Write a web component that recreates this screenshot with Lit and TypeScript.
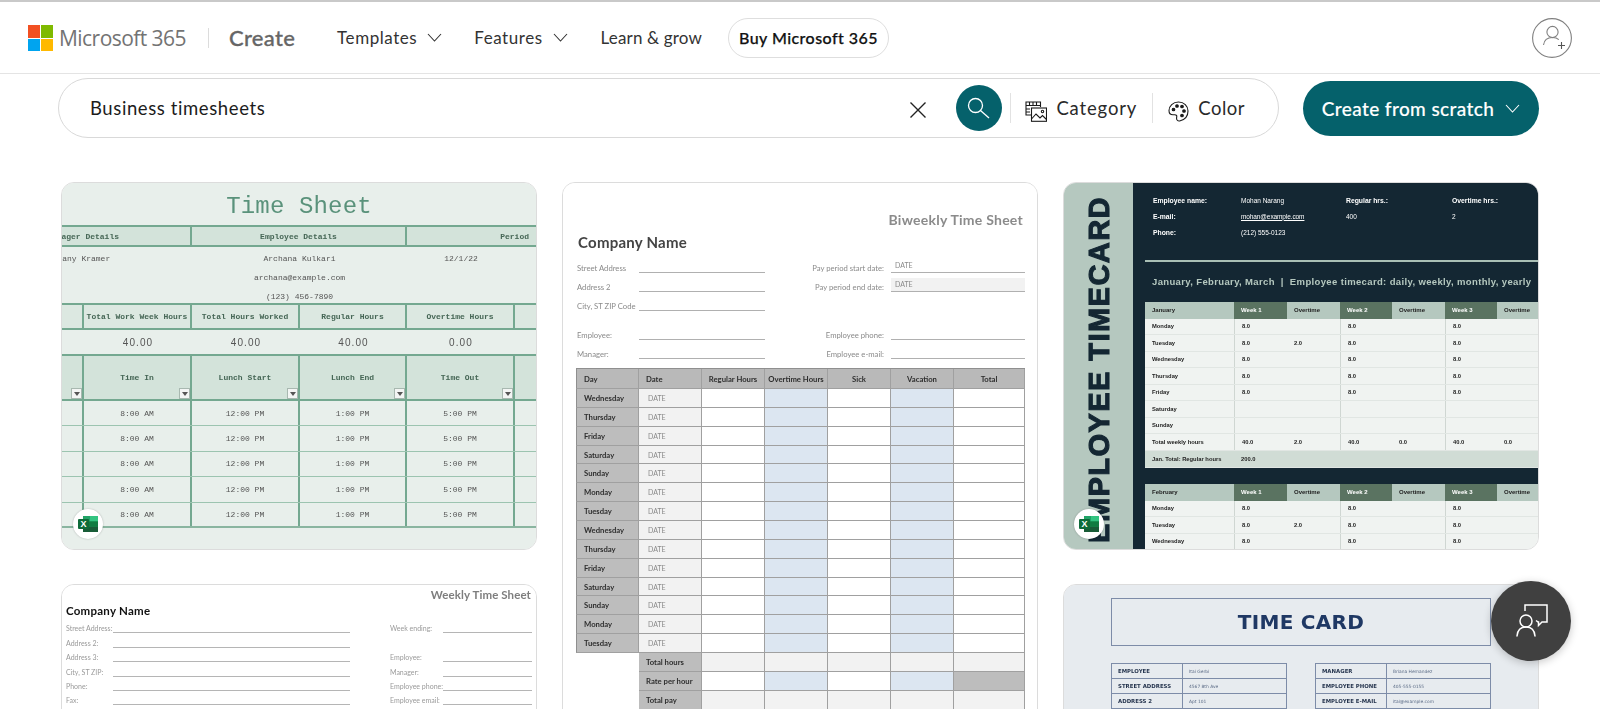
import { LitElement, html, css } from "lit";
import { customElement } from "lit/decorators.js";

const chevron = (size: number, color: string) => html`<svg class="chev" width=${size} height=${Math.round(size * 0.6)} viewBox="0 0 15 9" fill="none" stroke=${color} stroke-width="1.1"><path d="M1 1l6.5 7L14 1"/></svg>`;

const excel = html`<div class="xl">
  <svg width="20" height="16" viewBox="0 0 20 16">
    <rect x="5" y="0" width="15" height="16" rx="1" fill="#21a366"/>
    <rect x="12" y="0" width="8" height="5.4" fill="#33c481"/>
    <rect x="5" y="0" width="7" height="5.4" fill="#21a366"/>
    <rect x="5" y="5.4" width="7" height="5.3" fill="#107c41"/>
    <rect x="12" y="5.4" width="8" height="5.3" fill="#107c41"/>
    <rect x="5" y="10.7" width="15" height="5.3" fill="#185c37"/>
    <rect x="0" y="3" width="11" height="10" rx="1" fill="#0f6b3a"/>
    <text x="5.5" y="11.2" font-family="Liberation Sans" font-weight="700" font-size="9" fill="#fff" text-anchor="middle">X</text>
  </svg>
</div>`;

const tsTimes = ["8:00 AM", "12:00 PM", "1:00 PM", "5:00 PM"];
const tsCols = ["Time In", "Lunch Start", "Lunch End", "Time Out"];
const tsTotals = [
  ["Total Work Week Hours", "40.00"],
  ["Total Hours Worked", "40.00"],
  ["Regular Hours", "40.00"],
  ["Overtime Hours", "0.00"],
];

const bwDays = ["Wednesday", "Thursday", "Friday", "Saturday", "Sunday", "Monday", "Tuesday", "Wednesday", "Thursday", "Friday", "Saturday", "Sunday", "Monday", "Tuesday"];
const bwHead = ["Day", "Date", "Regular Hours", "Overtime Hours", "Sick", "Vacation", "Total"];

const tcRows = [
  ["Monday", "8.0", "", "8.0", "", "8.0", ""],
  ["Tuesday", "8.0", "2.0", "8.0", "", "8.0", ""],
  ["Wednesday", "8.0", "", "8.0", "", "8.0", ""],
  ["Thursday", "8.0", "", "8.0", "", "8.0", ""],
  ["Friday", "8.0", "", "8.0", "", "8.0", ""],
  ["Saturday", "", "", "", "", "", ""],
  ["Sunday", "", "", "", "", "", ""],
];
const tcFeb = tcRows.slice(0, 3);

@customElement("app-root")
export class AppRoot extends LitElement {
  static styles = css`
    :host { display: block; width: 1600px; height: 709px; overflow: hidden; background: #fff; font-family: "Lato", "Liberation Sans", sans-serif; color: #242424; position: relative; }
    * { box-sizing: border-box; }
    .strip { height: 2px; background: #c9c9c9; }
    header { height: 72px; border-bottom: 1px solid #e4e4e4; display: flex; align-items: center; padding: 0 28px 0 28px; }
    .logo { display: grid; grid-template-columns: 12px 12px; grid-auto-rows: 12.5px; gap: 1px; width: 25px; margin-top: 1px; }
    .logo i { display: block; }
    .brand { font-family: "Open Sans", sans-serif; font-size: 21px; letter-spacing: -0.55px; color: #737373; margin-left: 6px; }
    .vsep { width: 1px; height: 20px; background: #dcdcdc; margin: 0 20px 0 22px; }
    .create { font-size: 22px; font-weight: 500; color: #666; letter-spacing: 0.3px; -webkit-text-stroke: 0.3px #666; }
    nav { display: flex; align-items: center; margin-left: 42px; font-size: 17px; letter-spacing: 0.55px; color: #333; }
    .nav-item { display: flex; align-items: center; gap: 10px; margin-right: 32px; }
    .nav-item.feat { margin-right: 33px; }
    .nav-item.plain { margin-right: 26px; letter-spacing: 0.15px; }
    .buy { height: 40px; width: 161px; border: 1px solid #dedede; border-radius: 20px; display: flex; align-items: center; justify-content: center; color: #111; font-weight: 500; font-size: 16px; letter-spacing: 0.45px; -webkit-text-stroke: 0.25px #111; }
    .avatar { margin-left: auto; width: 40px; height: 40px; display: block; }

    .search-row { display: flex; align-items: center; padding: 0 61px 0 58px; gap: 24px; height: 60px; margin-top: 4px; }
    .search { width: 1221px; height: 60px; border: 1px solid #d9d9d9; border-radius: 30px; display: flex; align-items: center; padding-left: 31px; }
    .query { font-size: 18.5px; letter-spacing: 0.6px; color: #1c1c1c; flex: 1; }
    .x { margin-right: 29px; margin-top: 3px; display: block; }
    .go { width: 46px; height: 46px; border-radius: 50%; background: #05616b; display: block; margin-right: 8px; }
    .sep2 { width: 1px; height: 30px; background: #e2e2e2; }
    .tool { display: flex; align-items: center; font-size: 18.5px; letter-spacing: 0.85px; color: #2a2a2a; }
    .tool svg { display: block; margin-top: 6px; }
    .tool.cat { padding: 0 15px 0 14px; gap: 9px; }
    .tool.pal { padding: 0 33px 0 15px; gap: 9px; letter-spacing: 0.5px; }
    .cfs { width: 236px; height: 55px; border-radius: 28px; background: #05616b; color: #fff; display: flex; align-items: center; justify-content: center; gap: 11px; font-size: 19px; font-weight: 500; letter-spacing: 0.4px; -webkit-text-stroke: 0.15px #fff; }

    .cols { display: flex; gap: 25px; padding: 0 61px; margin-top: 44px; }
    .col-m { width: 476px; display: flex; flex-direction: column; gap: 34px; flex: none; }
    .card { position: relative; width: 476px; height: 368px; border: 1px solid #dcdcdc; border-radius: 13px; overflow: hidden; flex: none; }
    .card.short { height: 300px; }
    .card.tall { height: 560px; }
    .thumb { width: 100%; height: 100%; filter: blur(0.3px); }
    .xl { position: absolute; left: 11px; top: 326px; width: 30px; height: 30px; border-radius: 50%; background: #fff; display: flex; align-items: center; justify-content: center; box-shadow: 0 0 2px rgba(0,0,0,.25); }
    .card.dark .xl { left: 10px; }

    /* Time Sheet */
    .ts { background: #e8efeb; font-family: "Liberation Mono", monospace; color: #555; font-size: 8px; }
    .ts-title { height: 44px; padding-top: 5px; display: flex; align-items: center; justify-content: center; font-size: 24px; letter-spacing: 0.15px; color: #5a927b; border-bottom: 2px solid #74a890; }
    .tr { display: grid; grid-template-columns: 22px 108px 108px 107px 108px 1fr; border-bottom: 2px solid #74a890; }
    .tr > div { display: flex; align-items: center; justify-content: center; border-right: 2px solid #74a890; white-space: nowrap; position: relative; }
    .tr > div:last-child { border-right: 0; }
    .h1 { height: 20px; background: #d3e3da; font-weight: 700; color: #456655; grid-template-columns: 130px 215px 1fr; }
    .h1 .lead { justify-content: flex-start; }
    .h1 .lead span { margin-left: -15px; }
    .h1 .per { justify-content: flex-end; padding-right: 7px; }
    .det { height: 58px; grid-template-columns: 130px 215px 1fr; align-items: start; }
    .det > div { border-right: 0; flex-direction: column; justify-content: flex-start; padding-top: 2px; line-height: 19px; }
    .det .lead { align-items: flex-start; }
    .det .lead span { margin-left: -19px; }
    .det .per { padding-right: 21px; }
    .h2 { height: 25px; font-weight: 700; }
    .h2 > div { background: #dce8e1; color: #456655; }
    .nums { height: 26px; font-size: 10px; font-family: "Liberation Sans", sans-serif; letter-spacing: 1.1px; }
    .nums > div { border-right: 0; }
    .h3 { height: 45px; font-weight: 700; }
    .h3 > div { background: #d3e3da; color: #456655; font-size: 8px; }
    .flt { position: absolute; right: 0; bottom: 0; width: 11px; height: 11px; background: #f3f5f4; border: 1px solid #a8b8b0; display: flex; align-items: center; justify-content: center; }
    .flt::after { content: ""; border-left: 3px solid transparent; border-right: 3px solid transparent; border-top: 4px solid #555; }
    .dr { height: 25.4px; border-bottom: 1px solid #9cc4b0; }
    .dr:last-child { border-bottom: 2px solid #8ab5a0; }

    /* Biweekly */
    .bw { padding: 28px 13px 0; background: #fff; font-family: "Lato", "Liberation Sans", sans-serif; color: #8a8a8a; font-size: 7.7px; }
    .bw-title { text-align: right; padding-right: 1px; font-weight: 700; font-size: 14px; line-height: 18px; color: #8b8b8b; letter-spacing: 0.25px; }
    .bw-co { font-weight: 700; font-size: 15px; line-height: 18px; color: #444; margin: 4px 0 0 2px; letter-spacing: 0.25px; }
    .bw-form { display: grid; grid-template-columns: 63px 126px 126px 134px; grid-template-rows: 14px 14px 14px 5px 14px 14px; row-gap: 5px; margin-top: 8px; }
    .lbl { padding-left: 1px; line-height: 9px; align-self: end; white-space: nowrap; }
    .rl { text-align: right; padding-right: 7px; line-height: 9px; align-self: end; white-space: nowrap; }
    .ln { border-bottom: 1px solid #b0b0b0; padding-left: 4px; font-size: 7px; display: flex; align-items: flex-end; padding-bottom: 2px; line-height: 9px; }
    .ln.shade { background: #f2f2f2; }
    .gapr { grid-column: 1 / -1; }
    .bw-table { margin-top: 9px; width: 449px; border-top: 1px solid #8f8f8f; font-size: 7.7px; }
    .bwr { display: grid; grid-template-columns: 63px 63px 63px 63px 63px 63px 1fr; height: 18.86px; }
    .bwr > div { border-right: 1px solid #a0a0a0; border-bottom: 1px solid #a0a0a0; display: flex; align-items: center; white-space: nowrap; }
    .bwr > div:first-child { border-left: 1px solid #8f8f8f; }
    .bwr.head { height: 20px; }
    .bwr.head > div { background: #b9b9b9; color: #2e2e2e; font-weight: 700; justify-content: center; }
    .bwr.head > div:nth-child(-n+2) { justify-content: flex-start; padding-left: 7px; }
    .day { background: #bdbdbd; color: #2e2e2e; font-weight: 700; padding-left: 7px; }
    .dt { background: #f2f2f2; color: #8a8a8a; padding-left: 9px; font-size: 7px; }
    .blue { background: #dce6f1; }
    .lgt { background: #f2f2f2; }
    .dk { background: #bdbdbd; }
    .bwr > div.none { border: 0; }

    /* Timecard */
    .tc { display: flex; background: #142733; font-family: "Liberation Sans", sans-serif; }
    .side { width: 69px; flex: none; background: #b5c8bf; display: flex; align-items: flex-start; justify-content: center; padding-top: 13px; }
    .side span { writing-mode: vertical-rl; transform: rotate(180deg); font-weight: 700; font-size: 29px; letter-spacing: 1.45px; color: #142733; -webkit-text-stroke: 1.1px #142733; white-space: nowrap; line-height: 30px; }
    .tc-main { flex: 1; padding: 9px 0 0 12px; min-width: 0; }
    .tc-info { display: grid; grid-template-columns: 88px 105px 106px 1fr; grid-auto-rows: 16px; padding-left: 8px; color: #fff; font-size: 6.5px; align-items: center; white-space: nowrap; }
    .tc-info b { font-size: 6.8px; }
    .tc-info u { letter-spacing: -0.1px; }
    .tc-div { height: 1.5px; background: #a9bfb5; margin-top: 20px; }
    .tc-sub { margin: 13px 0 0 7px; height: 14px; line-height: 14px; font-weight: 700; font-size: 9.5px; letter-spacing: 0.36px; color: #b5c8bf; white-space: nowrap; }
    .tcr { display: grid; grid-template-columns: 89px 53px 53px 52px 53px 52px 1fr; height: 16.5px; background: #f0f3f1; border-bottom: 1px solid #e1e6e3; color: #222; font-size: 5.8px; font-weight: 700; }
    .tcr > div { display: flex; align-items: center; padding-left: 7px; white-space: nowrap; }
    .tcr > div:nth-child(2n) { border-left: 1px solid #cfd6d2; }
    .tcr.hd { height: 17px; border: 0; font-size: 6px; }
    .tcr.hd > div { background: #b5c8bf; border: 0; }
    .tcr.hd > div:nth-child(2n) { background: #5a7361; color: #fff; }
    .tcr.sum > div:nth-child(n) { border: 0; }
    .tcr.sum { background: #d0dcd5; grid-template-columns: 89px 1fr; height: 17px; }
    .tc-t { margin-top: 13px; }
    .tc-f { margin-top: 16px; }

    /* Weekly */
    .wk { background: #fff; font-family: "Lato", "Liberation Sans", sans-serif; color: #9a9a9a; font-size: 7px; padding: 2px 5px 0 4px; }
    .wk-t { text-align: right; font-weight: 700; font-size: 11.5px; line-height: 16px; color: #7e7e7e; letter-spacing: 0.1px; }
    .wk-c { font-weight: 700; font-size: 11.5px; line-height: 16px; color: #111; letter-spacing: 0.25px; }
    .wk-f { display: grid; grid-template-columns: 47px 237px 40px 53px 89px; grid-auto-rows: 14.4px; }
    .wk-f > div { line-height: 9px; white-space: nowrap; align-self: end; }
    .wk-f .ln { padding: 0; height: 14.4px; border-bottom-color: #b5b5b5; }
    .wk-f .noln { height: 14.4px; }

    /* Time card */
    .tcs { background: #e7ebef; padding: 13px 0 0 47px; font-family: "DejaVu Sans", sans-serif; color: #1f3864; }
    .tb { width: 380px; height: 48px; border: 1.5px solid #7d8ca8; display: flex; align-items: center; justify-content: center; font-weight: 700; font-size: 20px; letter-spacing: 0.3px; color: #1f3864; }
    .two { display: flex; gap: 28px; margin-top: 17px; width: 380px; }
    .tt { width: 176px; border: 1px solid #7d8ca8; border-bottom: 0; }
    .ttr { display: grid; grid-template-columns: 71px 1fr; height: 15px; border-bottom: 1px solid #7d8ca8; font-size: 5.4px; align-items: center; }
    .ttr b { padding-left: 6px; height: 100%; display: flex; align-items: center; border-right: 1px solid #7d8ca8; color: #27364f; white-space: nowrap; }
    .ttr span { padding-left: 6px; font-size: 4.4px; color: #5b6b86; white-space: nowrap; }

    .fab { position: absolute; left: 1491px; top: 581px; width: 80px; height: 80px; border-radius: 50%; background: #404040; box-shadow: 0 2px 8px rgba(0,0,0,.22); }
    .fab svg { display: block; }
  `;

  private tsSheet() {
    return html`<div class="thumb ts">
      <div class="ts-title">Time Sheet</div>
      <div class="tr h1"><div class="lead"><span>Manager Details</span></div><div>Employee Details</div><div class="per">Period</div></div>
      <div class="tr det">
        <div class="lead"><span>Tiffany Kramer</span></div>
        <div><span>Archana Kulkari</span><span>archana@example.com</span><span>(123) 456-7890</span></div>
        <div class="per"><span>12/1/22</span></div>
      </div>
      <div class="tr h2"><div></div>${tsTotals.map((t) => html`<div>${t[0]}</div>`)}<div></div></div>
      <div class="tr nums"><div></div>${tsTotals.map((t) => html`<div>${t[1]}</div>`)}<div></div></div>
      <div class="tr h3"><div><i class="flt"></i></div>${tsCols.map((t) => html`<div>${t}<i class="flt"></i></div>`)}<div></div></div>
      ${[0, 1, 2, 3, 4].map(() => html`<div class="tr dr"><div></div>${tsTimes.map((t) => html`<div>${t}</div>`)}<div></div></div>`)}
    </div>`;
  }

  private biweekly() {
    const blank = [0, 1, 2, 3, 4];
    return html`<div class="thumb bw">
      <div class="bw-title">Biweekly Time Sheet</div>
      <div class="bw-co">Company Name</div>
      <div class="bw-form">
        <div class="lbl">Street Address</div><div class="ln"></div><div class="rl">Pay period start date:</div><div class="ln">DATE</div>
        <div class="lbl">Address 2</div><div class="ln"></div><div class="rl">Pay period end date:</div><div class="ln shade">DATE</div>
        <div class="lbl">City, ST ZIP Code</div><div class="ln"></div><div></div><div></div>
        <div class="gapr"></div>
        <div class="lbl">Employee:</div><div class="ln"></div><div class="rl">Employee phone:</div><div class="ln"></div>
        <div class="lbl">Manager:</div><div class="ln"></div><div class="rl">Employee e-mail:</div><div class="ln"></div>
      </div>
      <div class="bw-table">
        <div class="bwr head">${bwHead.map((h) => html`<div>${h}</div>`)}</div>
        ${bwDays.map((d) => html`<div class="bwr">
          <div class="day">${d}</div><div class="dt">DATE</div>
          ${blank.map((i) => html`<div class=${i === 1 || i === 3 ? "blue" : ""}></div>`)}
        </div>`)}
        <div class="bwr"><div class="none"></div><div class="day">Total hours</div><div class="lgt"></div><div class="lgt"></div><div class="lgt"></div><div class="lgt"></div><div class="lgt"></div></div>
        <div class="bwr"><div class="none"></div><div class="day">Rate per hour</div><div></div><div class="blue"></div><div></div><div class="blue"></div><div class="dk"></div></div>
        <div class="bwr"><div class="none"></div><div class="day">Total pay</div><div class="lgt"></div><div class="lgt"></div><div class="lgt"></div><div class="lgt"></div><div class="lgt"></div></div>
      </div>
    </div>`;
  }

  private tcHead(month: string) {
    return html`<div class="tcr hd"><div>${month}</div><div>Week 1</div><div>Overtime</div><div>Week 2</div><div>Overtime</div><div>Week 3</div><div>Overtime</div></div>`;
  }

  private tcRow(r: string[]) {
    return html`<div class="tcr">${r.map((c) => html`<div>${c}</div>`)}</div>`;
  }

  private timecard() {
    return html`<div class="thumb tc">
      <div class="side"><span>EMPLOYEE TIMECARD</span></div>
      <div class="tc-main">
        <div class="tc-info">
          <b>Employee name:</b><span>Mohan Narang</span><b>Regular hrs.:</b><b>Overtime hrs.:</b>
          <b>E-mail:</b><u>mohan@example.com</u><span>400</span><span>2</span>
          <b>Phone:</b><span>(212) 555-0123</span><span></span><span></span>
        </div>
        <div class="tc-div"></div>
        <div class="tc-sub">January, February, March &nbsp;|&nbsp; Employee timecard: daily, weekly, monthly, yearly</div>
        <div class="tc-t">
          ${this.tcHead("January")}
          ${tcRows.map((r) => this.tcRow(r))}
          ${this.tcRow(["Total weekly hours", "40.0", "2.0", "40.0", "0.0", "40.0", "0.0"])}
          <div class="tcr sum"><div>Jan. Total: Regular hours</div><div>200.0</div></div>
        </div>
        <div class="tc-f">
          ${this.tcHead("February")}
          ${tcFeb.map((r) => this.tcRow(r))}
        </div>
      </div>
    </div>`;
  }

  private weekly() {
    const rows = [
      ["Street Address:", "Week ending:", true],
      ["Address 2:", "", false],
      ["Address 3:", "Employee:", true],
      ["City, ST ZIP:", "Manager:", true],
      ["Phone:", "Employee phone:", true],
      ["Fax:", "Employee email:", true],
    ] as [string, string, boolean][];
    return html`<div class="thumb wk">
      <div class="wk-t">Weekly Time Sheet</div>
      <div class="wk-c">Company Name</div>
      <div class="wk-f">
        ${rows.map((r) => html`<div>${r[0]}</div><div class="ln"></div><div></div><div>${r[1]}</div><div class=${r[2] ? "ln" : "noln"}></div>`)}
      </div>
    </div>`;
  }

  private timeCardSheet() {
    const l = [["EMPLOYEE", "Itai Gerbi"], ["STREET ADDRESS", "4567 8th Ave"], ["ADDRESS 2", "Apt 101"]];
    const r = [["MANAGER", "Briana Hernandez"], ["EMPLOYEE PHONE", "405-555-0155"], ["EMPLOYEE E-MAIL", "itai@example.com"]];
    const tbl = (rows: string[][]) => html`<div class="tt">${rows.map((x) => html`<div class="ttr"><b>${x[0]}</b><span>${x[1]}</span></div>`)}</div>`;
    return html`<div class="thumb tcs">
      <div class="tb">TIME CARD</div>
      <div class="two">${tbl(l)}${tbl(r)}</div>
    </div>`;
  }

  render() {
    return html`
      <div class="strip"></div>
      <header>
        <div class="logo"><i style="background:#f25022"></i><i style="background:#7fba00"></i><i style="background:#00a4ef"></i><i style="background:#ffb900"></i></div>
        <div class="brand">Microsoft 365</div>
        <div class="vsep"></div>
        <div class="create">Create</div>
        <nav>
          <div class="nav-item">Templates ${chevron(15, "#333")}</div>
          <div class="nav-item feat">Features ${chevron(15, "#333")}</div>
          <div class="nav-item plain">Learn &amp; grow</div>
          <div class="buy">Buy Microsoft 365</div>
        </nav>
        <svg class="avatar" viewBox="0 0 40 40" fill="none" stroke="#808080">
          <circle cx="20" cy="20" r="19.4" stroke-width="1.1"/>
          <circle cx="20.5" cy="14" r="5.6" stroke-width="1.1"/>
          <path d="M11.5 27c.6-5 4-7.5 9-7.5 2.6 0 4.8.7 6.3 2.2" stroke-width="1.1"/>
          <path d="M29.5 24v7M26 27.5h7" stroke="#555" stroke-width="1.1"/>
        </svg>
      </header>
      <div class="search-row">
        <div class="search">
          <div class="query">Business timesheets</div>
          <svg class="x" width="18" height="18" viewBox="0 0 18 18" stroke="#222" stroke-width="1.4" fill="none"><path d="M1.5 1.5l15 15M16.5 1.5l-15 15"/></svg>
          <svg class="go" viewBox="0 0 46 46" fill="none" stroke="#fff" stroke-width="1.3"><circle cx="19.5" cy="20.5" r="7"/><path d="M24.5 25.5l8.5 7.5"/></svg>
          <div class="sep2"></div>
          <div class="tool cat">
            <svg width="22" height="21" viewBox="0 0 22 21" fill="none" stroke="#1a1a1a" stroke-width="1.1">
              <path d="M6 14H1V1h14.5v5"/>
              <path d="M1 4.5h14.5M4.5 1v3.5M8 1v3.5M11.5 1v3.5M1 8h4M1 11h4"/>
              <rect x="6.5" y="7" width="15" height="13.3" fill="#fff"/>
              <path d="M6.5 18l4.5-5 4 4 2.500-2.500 4 4"/>
              <circle cx="17.5" cy="10.5" r="1.2"/>
            </svg>
            Category
          </div>
          <div class="sep2"></div>
          <div class="tool pal">
            <svg width="21" height="21" viewBox="0 0 21 21" fill="none" stroke="#1a1a1a" stroke-width="1.1">
              <path d="M10.5 1C5 1 1 5 1 9.5c0 3 2 4.3 4 4.3 1.5 0 2.700-.5 3.500.5.900 1.200-.5 2.500.3 4.300.6 1.300 2 1.700 3.500 1.200 4.500-1.300 7.700-5 7.700-9.800C20 5 16 1 10.500 1z"/>
              <circle cx="5.5" cy="8.5" r="1.3" fill="#1a1a1a"/><circle cx="9" cy="5" r="1.3" fill="#1a1a1a"/><circle cx="14" cy="5.5" r="1.3" fill="#1a1a1a"/><circle cx="16" cy="10" r="1.3" fill="#1a1a1a"/><circle cx="14" cy="14.5" r="1.3" fill="#1a1a1a"/>
            </svg>
            Color
          </div>
        </div>
        <div class="cfs">Create from scratch ${chevron(15, "#fff")}</div>
      </div>
      <div class="cols">
        <div class="col-m">
          <div class="card">${this.tsSheet()}${excel}</div>
          <div class="card short">${this.weekly()}</div>
        </div>
        <div class="col-m">
          <div class="card tall">${this.biweekly()}</div>
        </div>
        <div class="col-m">
          <div class="card dark">${this.timecard()}${excel}</div>
          <div class="card short">${this.timeCardSheet()}</div>
        </div>
      </div>
      <div class="fab">
        <svg width="80" height="80" viewBox="0 0 80 80" fill="none" stroke="#fff" stroke-width="1.5">
          <path d="M34 30v-6h22v17h-5l-3.5 3.5V41h-1"/>
          <path d="M45 39.5l2 1.5"/>
          <circle cx="35" cy="40" r="6"/>
          <path d="M26 55c.5-6 4-9 9-9s8.5 3 9 9" stroke-linecap="round"/>
        </svg>
      </div>
    `;
  }
}
